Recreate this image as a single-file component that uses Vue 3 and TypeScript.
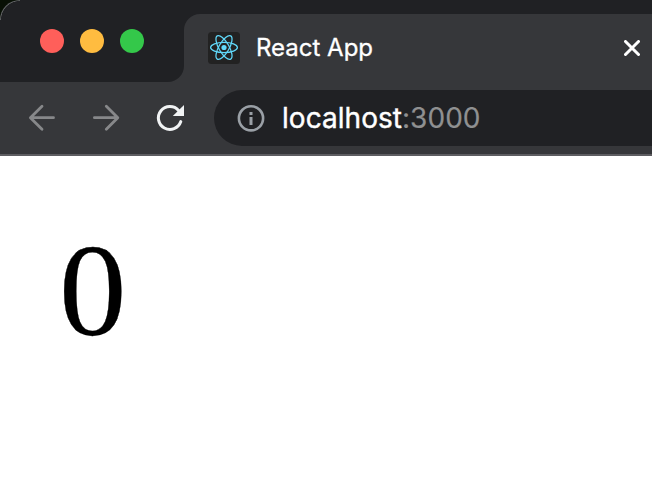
<script setup lang="ts">
import { ref } from 'vue'

const count = ref<number>(0)
const lights: string[] = ['close', 'minimize', 'maximize']
const orbits: number[] = [0, 60, 120]
</script>

<template>
  <div class="window">
    <div class="frame">
      <header class="tabstrip">
        <div class="controls">
          <span v-for="name in lights" :key="name" class="light" :class="name"></span>
        </div>
        <div class="tab">
          <svg class="favicon" viewBox="0 0 32 32">
            <rect width="32" height="32" rx="3.5" fill="#222222" />
            <g fill="none" stroke="#61dafb" stroke-width="1.25">
              <ellipse v-for="a in orbits" :key="a" cx="16" cy="15.5" rx="13.4" ry="5.1" :transform="`rotate(${a} 16 15.5)`" />
            </g>
            <circle cx="16" cy="15.5" r="2.6" fill="#61dafb" />
          </svg>
          <span class="title">React App</span>
          <svg class="dismiss" viewBox="0 0 16 16">
            <path d="M1.5 1.5l13 13M14.5 1.5l-13 13" fill="none" stroke="#fff" stroke-width="3" stroke-linecap="round" />
          </svg>
        </div>
      </header>
      <nav class="toolbar">
        <svg class="icon" viewBox="0 0 32 32">
          <path d="M27.5 15.7H5.5M16 4.3L4.4 15.7L16 27.2" fill="none" stroke="#87888a" stroke-width="2.8" stroke-linecap="round" stroke-linejoin="round" />
        </svg>
        <svg class="icon" viewBox="0 0 32 32">
          <path d="M4.4 15.7H26.5M16.3 4.3L27.8 15.7L16.3 27.2" fill="none" stroke="#87888a" stroke-width="2.8" stroke-linecap="round" stroke-linejoin="round" />
        </svg>
        <svg class="icon" viewBox="0 0 32 32">
          <path d="M24.6 8.4A11.5 11.5 0 1 0 26.8 19.6" fill="none" stroke="#f1f3f4" stroke-width="3" stroke-linecap="round" />
          <path d="M30 3V14H18.8Z" fill="#f1f3f4" />
        </svg>
        <div class="address">
          <svg class="info" viewBox="0 0 28 28">
            <circle cx="14" cy="14.3" r="12.1" fill="none" stroke="#9aa0a6" stroke-width="2.6" />
            <path d="M12.5 8h3v2.9h-3zM12.5 13h3v8h-3z" fill="#9aa0a6" />
          </svg>
          <span class="url">localhost<span class="port">:3000</span></span>
        </div>
      </nav>
    </div>
    <main class="page"><span class="count">{{ count }}</span></main>
  </div>
</template>

<style>
body {
  margin: 0;
  overflow: hidden;
}
</style>

<style scoped>
.window {
  display: flex;
  flex-direction: column;
  width: 652px;
  height: 480px;
  overflow: hidden;
  background: #fff;
}
.frame {
  background: #081005;
}
.tabstrip {
  display: flex;
  height: 82px;
  box-sizing: border-box;
  padding-top: 14px;
  border-top-left-radius: 20px;
  background:
    linear-gradient(#36373a, #36373a) 168px 100% / 484px 16px no-repeat,
    radial-gradient(circle at 20px 20px, transparent 18.7px, #606264 19.3px) 0 0 / 20px 20px no-repeat,
    #202124;
}
.tabstrip {
  background-position: right bottom, 0 0, 0 0;
}
.controls {
  display: flex;
  align-items: center;
  gap: 16px;
  width: 184px;
  height: 68px;
  box-sizing: border-box;
  padding: 0 0 14px 40px;
  background: linear-gradient(#202124, #202124) right bottom / 40px 40px no-repeat;
  border-bottom-right-radius: 16px;
}
.light {
  width: 24px;
  height: 24px;
  border-radius: 50%;
}
.close {
  background: #ff5f5a;
}
.minimize {
  background: #ffbc40;
}
.maximize {
  background: #34c84a;
}
.tab {
  display: flex;
  flex: 1;
  align-items: center;
  box-sizing: border-box;
  padding: 0 12px 0 24px;
  border-top-left-radius: 16px;
  background: #36373a;
}
.favicon {
  width: 32px;
  height: 32px;
}
.title {
  flex: 1;
  margin-left: 16px;
  color: #fff;
  font: 400 24px/32px Inter, sans-serif;
  -webkit-text-stroke: 0.3px currentColor;
  white-space: nowrap;
}
.dismiss {
  width: 16px;
  height: 16px;
}
.toolbar {
  display: flex;
  align-items: center;
  gap: 32px;
  height: 74px;
  box-sizing: border-box;
  padding: 0 0 0 26px;
  background: #36373a;
  border-bottom: 2px solid #5d5d61;
}
.icon {
  width: 32px;
  height: 32px;
  flex: none;
}
.address {
  display: flex;
  flex: 1;
  align-items: center;
  height: 56px;
  box-sizing: border-box;
  margin-left: -4px;
  padding-left: 22.5px;
  border-radius: 28px 0 0 28px;
  background: #202124;
}
.info {
  width: 28px;
  height: 28px;
}
.url {
  margin-left: 17.5px;
  color: #fff;
  font: 400 28px/36px Inter, sans-serif;
  letter-spacing: 0.04px;
  -webkit-text-stroke: 0.4px currentColor;
  white-space: nowrap;
}
.port {
  color: #8f9091;
  -webkit-text-stroke: 0.2px currentColor;
}
.page {
  flex: 1;
  padding: 62px 59.6px;
  color: #000;
  font: 131px/146px "Liberation Serif", serif;
}
.count {
  display: inline-block;
  transform: scaleX(1.03);
  -webkit-text-stroke: 0.3px #000;
}
</style>
